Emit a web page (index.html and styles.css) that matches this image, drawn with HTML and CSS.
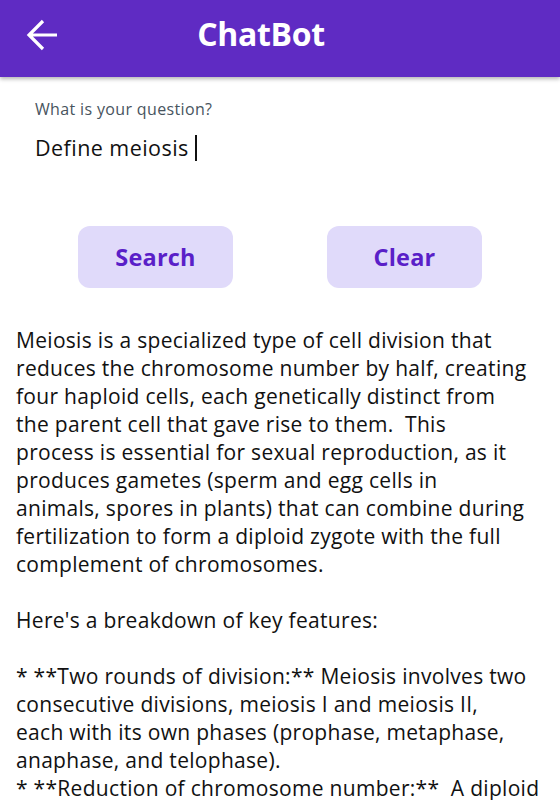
FILE: index.html
```html
<!DOCTYPE html>
<html>
<head>
<meta charset="utf-8">
<link rel="stylesheet" href="styles.css">
</head>
<body>
<header class="appbar">
  <button class="back" aria-label="Back">
    <svg width="34" height="34" viewBox="0 0 34 34"><path d="M31 17H3M17 3L3 17l14 14" fill="none" stroke="#fff" stroke-width="3.2"/></svg>
  </button>
  <h1 class="title">ChatBot</h1>
</header>
<main class="content">
  <div class="field">
    <label class="label">What is your question?</label>
    <div class="input">Define meiosis <span class="caret"></span></div>
  </div>
  <div class="actions">
    <button class="btn">Search</button>
    <button class="btn">Clear</button>
  </div>
  <div class="answer">Meiosis is a specialized type of cell division that
reduces the chromosome number by half, creating
four haploid cells, each genetically distinct from
the parent cell that gave rise to them.  This
process is essential for sexual reproduction, as it
produces gametes (sperm and egg cells in
animals, spores in plants) that can combine during
fertilization to form a diploid zygote with the full
complement of chromosomes.

Here's a breakdown of key features:

* **Two rounds of division:** Meiosis involves two
consecutive divisions, meiosis I and meiosis II,
each with its own phases (prophase, metaphase,
anaphase, and telophase).
* **Reduction of chromosome number:**  A diploid</div>
</main>
</body>
</html>
```
FILE: styles.css
```css
html, body {
  margin: 0;
  padding: 0;
  background: #fff;
  overflow: hidden;
}
body {
  font-family: "Open Sans", "Noto Sans", sans-serif;
  color: #111;
}
.appbar {
  height: 77px;
  background: #5f2bc3;
  display: flex;
  align-items: center;
  justify-content: center;
  position: relative;
  box-shadow: 0 2px 4px rgba(0,0,0,0.3);
}
.back {
  position: absolute;
  left: 26px;
  top: 18px;
  background: none;
  border: 0;
  padding: 0;
  width: 34px;
  height: 34px;
  display: flex;
}
.title {
  margin: -10px 38px 0 0;
  color: #fff;
  font-size: 32px;
  font-weight: 700;
  letter-spacing: -0.3px;
}
.content {
  padding: 0 16px;
}
.field {
  padding: 22px 19px 0;
  height: 128px;
  box-sizing: border-box;
}
.label {
  display: block;
  font-size: 16px;
  letter-spacing: 0.35px;
  color: #48545e;
  line-height: 20px;
}
.input {
  margin-top: 15px;
  font-size: 21.5px;
  letter-spacing: 0.45px;
  line-height: 28px;
  color: #111;
  display: flex;
  align-items: center;
  white-space: pre;
}
.caret {
  display: inline-block;
  width: 2.5px;
  height: 26px;
  background: #111;
}
.actions {
  display: flex;
  justify-content: space-between;
  padding: 0 62px;
  margin-top: 21px;
}
.btn {
  width: 155px;
  height: 62px;
  border: 0;
  border-radius: 12px;
  background: #e0dafa;
  color: #5a1fc8;
  font-family: inherit;
  font-size: 23.5px;
  font-weight: 700;
  letter-spacing: 0.2px;
}
.answer {
  margin-top: 38px;
  font-size: 21px;
  letter-spacing: 0.3px;
  line-height: 28px;
  white-space: pre;
  color: #111;
}
```
